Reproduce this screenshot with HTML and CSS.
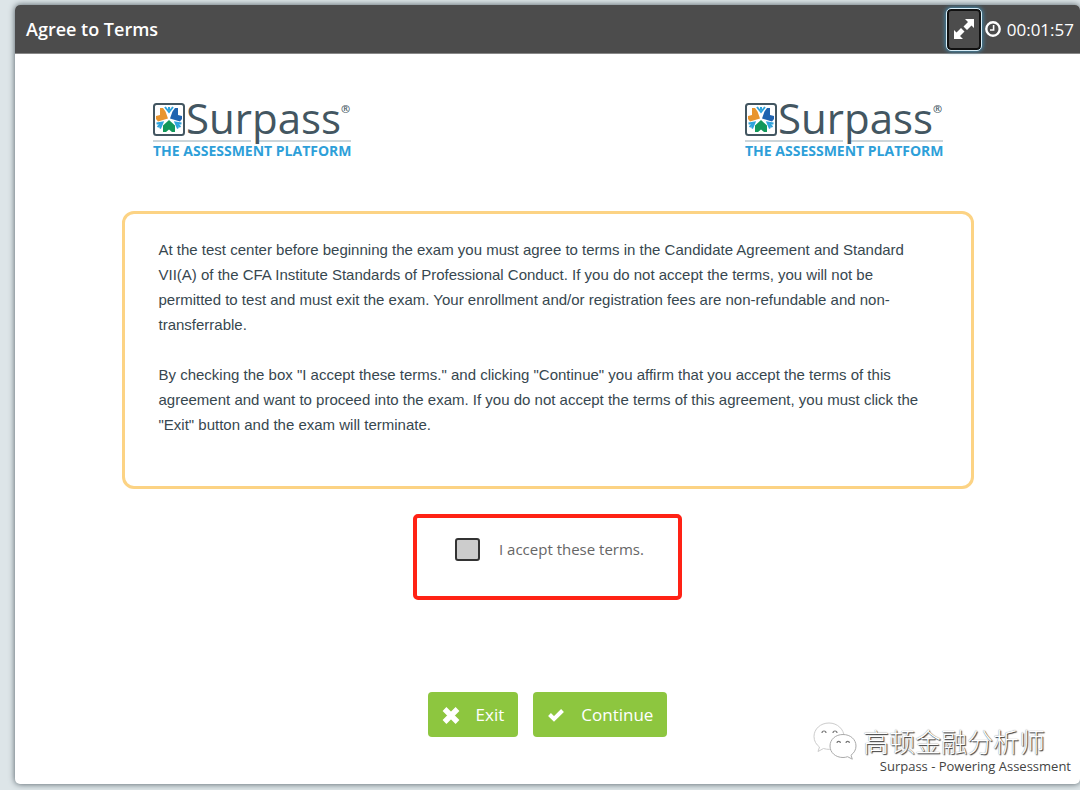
FILE: index.html
```html
<!DOCTYPE html>
<html lang="en">
<head>
    <meta charset="UTF-8">
    <meta name="viewport" content="width=device-width, initial-scale=1.0">
    <title>Agree to Terms</title>
    <link rel="stylesheet" href="styles.css">
</head>
<body>
  <svg class="defs" aria-hidden="true">
    <symbol id="surpass-mark" viewBox="0 0 200 60">
      <rect x="2" y="2" width="30" height="31" rx="2.5" fill="#fff" stroke="#435661" stroke-width="2"/>
      <path d="M17 18 23 23.500V30H20L17 27.500 14 30H11V23.500z" fill="#12985a"/>
      <path d="M16 16.500 13.500 9.500 11 6H8V13L4 14V17L6 19.500z" fill="#e8952f"/>
      <path d="M18 16.500 20.500 9.500 23 6H26V13L30 14V17L28 19.500z" fill="#1f63b0"/>
      <g fill="none" stroke="#2ea3dc" stroke-width="2">
        <path d="M13 5l4 5 4-5M17 5v3"/>
        <path d="M4.500 21.500l6-1-2.500 6M5.500 25l3-2.500M29.500 21.500l-6-1 2.500 6M28.500 25l-3-2.500"/>
      </g>
      <path d="M1 39h98M107 39h92" stroke="#cbd5da" stroke-width="2"/>
    </symbol>
  </svg>

  <div class="panel">
    <header class="header">
      <h1>Agree to Terms</h1>
      <div class="tools">
        <button class="expand" type="button" aria-label="Full screen">
          <svg viewBox="0 0 22 22" width="22" height="22">
            <path d="M12 1h9v9l-2.500-2.500-4.500 4.500-3.500-3.500L15 4zM10 21H1v-9l2.500 2.500L8 10l3.500 3.500L7 18z" fill="#fff"/>
          </svg>
        </button>
        <svg class="clock" viewBox="0 0 16 16" width="16" height="16">
          <circle cx="8" cy="8" r="6.700" fill="none" stroke="#fff" stroke-width="2.400"/>
          <path d="M8.600 4v5H5" fill="none" stroke="#fff" stroke-width="1.600"/>
        </svg>
        <span class="time">00:01:57</span>
      </div>
    </header>

    <main class="content">
      <div class="logos">
        <svg class="logo" viewBox="0 0 200 60">
          <use href="#surpass-mark"/>
          <text class="logo-name" x="34" y="32">Surpass</text>
          <text class="logo-reg" x="189" y="11">®</text>
          <text class="logo-tag" x="1" y="54">THE ASSESSMENT PLATFORM</text>
        </svg>
        <svg class="logo" viewBox="0 0 200 60">
          <use href="#surpass-mark"/>
          <text class="logo-name" x="34" y="32">Surpass</text>
          <text class="logo-reg" x="189" y="11">®</text>
          <text class="logo-tag" x="1" y="54">THE ASSESSMENT PLATFORM</text>
        </svg>
      </div>

      <div class="terms">
        <p>At the test center before beginning the exam you must agree to terms in the Candidate Agreement and Standard VII(A) of the CFA Institute Standards of Professional Conduct. If you do not accept the terms, you will not be permitted to test and must exit the exam. Your enrollment and/or registration fees are non-refundable and non-transferrable.</p>
        <p>By checking the box "I accept these terms." and clicking "Continue" you affirm that you accept the terms of this agreement and want to proceed into the exam. If you do not accept the terms of this agreement, you must click the "Exit" button and the exam will terminate.</p>
      </div>

      <div class="accept">
        <input type="checkbox" id="accept">
        <label for="accept">I accept these terms.</label>
      </div>

      <div class="buttons">
        <button class="btn" type="button">
          <svg viewBox="0 0 18 18" width="18" height="18"><path d="M2.500 3l13 13M15.500 3l-13 13" stroke="#fff" stroke-width="5.400"/></svg>
          Exit
        </button>
        <button class="btn" type="button">
          <svg viewBox="0 0 18 18" width="18" height="18"><path d="M2.500 8.500l4.500 4.500 8.500-8.500" fill="none" stroke="#fff" stroke-width="4"/></svg>
          Continue
        </button>
      </div>
    </main>

    <footer class="footer">
      <div class="watermark" lang="zh">
        <svg viewBox="0 0 44 38" width="44" height="38">
          <g fill="#fff" stroke="#aaa" stroke-width="1">
            <path d="M16 1C7.500 1 1 7 1 14.500c0 4.500 2.200 8 5.500 10.500L5 29.500l5.500-3c2 .600 4 .900 6 .900C25 27.400 31 21.500 31 14.500S24.500 1 16 1z" stroke="#ccc"/>
            <path d="M30 12.500c-7.500 0-13 5-13 11.500s5.500 11.500 13 11.500c1.600 0 3.200-.300 4.600-.800l4.700 2.500-1.300-4c3-2.200 5-5.400 5-9.200 0-6.500-5.500-11.500-13-11.500z"/>
          </g>
          <path d="M9 11a2 2 0 0 1 4 0M20 11a2 2 0 0 1 4 0M24 21a1.700 1.700 0 0 1 3.400 0M33 21a1.700 1.700 0 0 1 3.400 0" fill="none" stroke="#777" stroke-width="1.200"/>
        </svg>
        <span>高顿金融分析师</span>
      </div>
      <p>Surpass - Powering Assessment</p>
    </footer>
  </div>
</body>
</html>
```
FILE: styles.css
```css
*{
    margin: 0;
    padding: 0;
    box-sizing: border-box;
}
body{
    min-height: 100vh;
    padding: 5px 0 6px 15px;
    display: flex;
    background: #dde5e8;
    font-family: "Open Sans", "Noto Sans", sans-serif;
}
.defs{
    position: absolute;
    width: 0;
    height: 0;
}
.panel{
    flex: 1;
    display: flex;
    flex-direction: column;
    background: #fff;
    border-radius: 5px;
    box-shadow: 0 0 6px #4d5960;
}
.header{
    height: 49px;
    padding: 0 6px 0 11px;
    display: flex;
    justify-content: space-between;
    align-items: center;
    background: #4c4c4c;
    border-bottom: 1px solid #888;
    border-radius: 5px 5px 0 0;
    color: #fff;
}
.header h1{
    font-size: 18px;
    font-weight: 600;
}
.tools{
    display: flex;
    align-items: center;
}
.expand{
    width: 34px;
    height: 41px;
    margin-right: 4px;
    display: flex;
    justify-content: center;
    align-items: center;
    background: #4c4c4c;
    border: 2px solid #111;
    border-radius: 4px;
    outline: 1px solid #d8edf7;
    box-shadow: 0 0 5px 1px #3d9fd0;
}
.time{
    margin-left: 6px;
    font-size: 17px;
}
.content{
    width: 80%;
    margin: 0 auto;
}
.logos{
    padding: 48px 30px 0;
    display: flex;
    justify-content: space-between;
}
.logo{
    width: 200px;
    height: 60px;
    overflow: visible;
}
.logo-name{
    font-size: 42px;
    fill: #435661;
}
.logo-reg{
    font-size: 11px;
    font-weight: 600;
    fill: #435661;
}
.logo-tag{
    font-size: 14px;
    font-weight: 700;
    fill: #2e9fd9;
}
.terms{
    min-height: 278px;
    margin-top: 49px;
    padding: 23px 34px 48px;
    border: 3px solid #fcd384;
    border-radius: 12px;
    font-family: "Liberation Sans", Arial, sans-serif;
    font-size: 15px;
    line-height: 25px;
    color: #37474f;
}
.terms p + p{
    margin-top: 25px;
}
.accept{
    width: fit-content;
    height: 86px;
    margin: 25px auto 0;
    padding: 20px 34px 0 38px;
    display: flex;
    align-items: flex-start;
    gap: 19px;
    border: 4px solid #ff2215;
    border-radius: 5px;
    font-size: 15px;
    line-height: 23px;
    color: #666;
}
.accept input{
    appearance: none;
    width: 25px;
    height: 23px;
    background: #ccc;
    border: 2px solid #333;
    border-radius: 3px;
}
.accept input:checked{
    background: #8dc63f;
}
.buttons{
    margin-top: 92px;
    display: flex;
    justify-content: center;
    gap: 15px;
}
.btn{
    height: 45px;
    padding: 0 14px;
    display: flex;
    align-items: center;
    gap: 16px;
    background: #8dc63f;
    border: none;
    border-radius: 4px;
    font-family: inherit;
    font-size: 17px;
    color: #fff;
    cursor: pointer;
}
.btn:hover{
    background: #7cb32f;
}
.footer{
    position: relative;
    margin-top: auto;
    padding: 0 9px 8px;
    text-align: right;
    font-size: 13px;
    line-height: 20px;
    color: #444;
}
.watermark{
    position: absolute;
    right: 35px;
    bottom: 24px;
    display: flex;
    align-items: center;
    gap: 6px;
    font-family: "Noto Sans CJK SC", sans-serif;
    font-size: 26px;
    font-weight: 300;
    line-height: 32px;
    color: #fff;
    text-shadow: 1px 1px 1px #333, 0 0 1px #777;
}
```
